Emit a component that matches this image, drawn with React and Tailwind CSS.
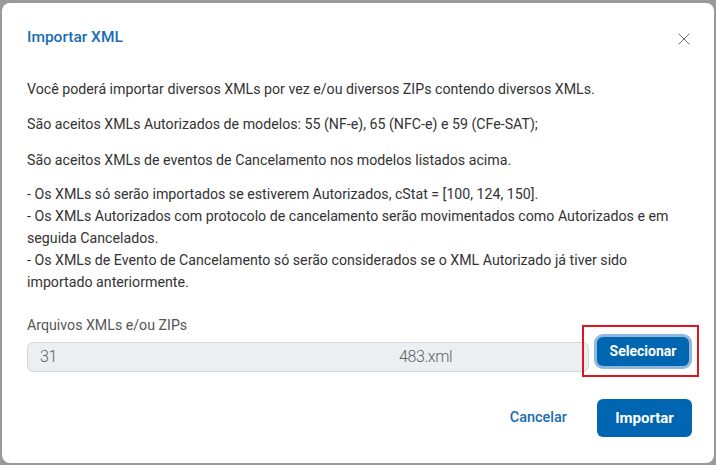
import { X } from 'lucide-react';

const App = () => {
  return (
    <div className="min-h-screen w-[716px] h-[465px] bg-[#9a9a9a] pt-[3px] pl-[2px] overflow-hidden" style={{ fontFamily: 'Roboto, "Liberation Sans", sans-serif' }}>
      <div className="w-[712px] h-[460px] bg-white rounded-lg pl-[25px] pr-[22px] flex flex-col">
        {/* header */}
        <div className="flex items-center justify-between pt-[21px]">
          <h2 className="text-[15.5px] leading-[22px] font-medium text-[#1a6db4]">Importar XML</h2>
          <button className="text-[#6f6f6f] -mr-[2px] mt-[5px]">
            <X size={20} strokeWidth={1.2} />
          </button>
        </div>

        {/* body */}
        <div className="mt-[29px] text-[14.2px] leading-[22px] text-[#333]">
          <p className="mb-[13px]">Você poderá importar diversos XMLs por vez e/ou diversos ZIPs contendo diversos XMLs.</p>
          <p className="mb-[14px]">São aceitos XMLs Autorizados de modelos: 55 (NF-e), 65 (NFC-e) e 59 (CFe-SAT);</p>
          <p className="mb-[12px]">São aceitos XMLs de eventos de Cancelamento nos modelos listados acima.</p>
          <p>
            - Os XMLs só serão importados se estiverem Autorizados, cStat = [100, 124, 150].<br />
            - Os XMLs Autorizados com protocolo de cancelamento serão movimentados como Autorizados e em<br />
            seguida Cancelados.<br />
            - Os XMLs de Evento de Cancelamento só serão considerados se o XML Autorizado já tiver sido<br />
            importado anteriormente.
          </p>
        </div>

        <label className="mt-[21px] text-[14.2px] leading-[22px] text-[#555]">Arquivos XMLs e/ou ZIPs</label>
        <div className="mt-[6px] flex items-start">
          <div className="flex-1 h-[30px] bg-[#eceff1] border border-[#d3d8dc] rounded-md flex items-center pl-[12px] text-[16px] text-[#5f5f5f] font-light tracking-[-0.4px]">
            <span className="w-[359px]">31</span>
            <span>483.xml</span>
          </div>
          <div className="relative -mt-[8px] ml-[5px] h-[35px]">
            <button className="h-[29px] w-[92px] mx-[3px] my-[3px] rounded-md bg-[#0066b1] text-white text-[14px] font-bold shadow-[0_0_0_3px_#8fb8dc]">
              Selecionar
            </button>
            <div className="absolute -left-[12px] -top-[9px] w-[117px] h-[52px] border-[2.5px] border-[#e0141e] pointer-events-none" />
          </div>
        </div>

        {/* footer */}
        <div className="mt-[27px] flex items-center justify-end gap-[30px]">
          <button className="text-[14.5px] font-medium text-[#1a6db4]">Cancelar</button>
          <button className="h-[38px] w-[95px] rounded-md bg-[#0066b1] text-white text-[15px] font-bold">Importar</button>
        </div>
      </div>
    </div>
  );
};

export default App;
